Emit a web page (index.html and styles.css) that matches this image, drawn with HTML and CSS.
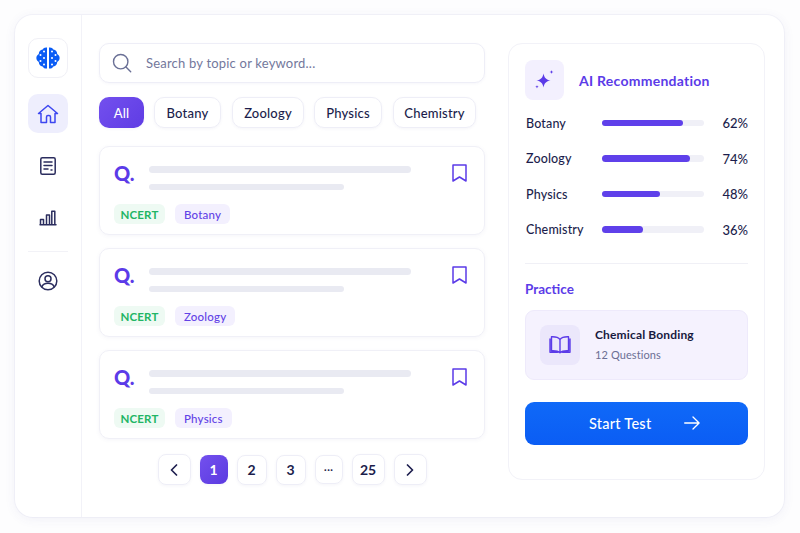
FILE: index.html
```html
<!DOCTYPE html>
<html lang="en">
<head>
<meta charset="utf-8">
<title>Question Bank</title>
<link rel="stylesheet" href="styles.css">
</head>
<body>
<div class="app">
  <nav class="sidebar">
    <div class="logo">
      <svg width="24" height="24" viewBox="0 0 24 24"><path fill="#0a5cf5" d="M11 1.5v21c-2 .4-3.6-.5-4.4-2C4.300 20 2.700 18.300 2.800 16 .9 14.800.3 13.400.4 12c-.1-1.400.5-2.800 2.400-4C2.700 5.700 4.300 4 6.600 3.500 7.400 2 9 1.100 11 1.500zM13 1.500c2-.4 3.600.5 4.400 2C19.700 4 21.300 5.700 21.200 8c1.900 1.200 2.500 2.600 2.400 4 .1 1.400-.5 2.800-2.400 4 .1 2.300-1.500 4-3.800 4.500-.8 1.500-2.400 2.400-4.400 2z"/><g fill="#fff"><circle cx="4.500" cy="9" r="1"/><circle cx="4.500" cy="15" r="1"/><circle cx="8" cy="12" r="1"/><circle cx="8" cy="5.500" r="1"/><circle cx="8" cy="18.500" r="1"/><circle cx="19.500" cy="9" r="1"/><circle cx="19.500" cy="15" r="1"/><circle cx="16" cy="12" r="1"/><circle cx="16" cy="5.500" r="1"/><circle cx="16" cy="18.500" r="1"/></g></svg>
    </div>
    <a class="nav-item nav-active">
      <svg width="22" height="20" viewBox="0 0 22 20" fill="none" stroke="#3d47f0" stroke-width="1.500" stroke-linejoin="round" stroke-linecap="round"><path d="M1.500 9.500 11 1.500l9.500 8h-2.500v9h-4.500v-5.500a1.500 1.500 0 0 0-1.500-1.500h-1a1.500 1.500 0 0 0-1.500 1.500v5.500H4v-9z"/></svg>
    </a>
    <a class="nav-item">
      <svg width="16" height="18" viewBox="0 0 16 18" fill="none" stroke="#2b2d5e" stroke-width="1.500" stroke-linecap="round" stroke-linejoin="round"><rect x=".8" y=".8" width="14.400" height="16.400" rx="1.500"/><path d="M4 5h8M4 8.500h8M4 12h4M11 13h1"/></svg>
    </a>
    <a class="nav-item">
      <svg width="18" height="16" viewBox="0 0 18 16" fill="none" stroke="#2b2d5e" stroke-width="1.500" stroke-linejoin="round" stroke-linecap="round"><path d="M1 14.800h16M1.500 14.800V9.500h3v5.300M7.500 14.800V5h3v9.800M12.800 14.800V1.200h3v13.600"/></svg>
    </a>
    <div class="nav-sep"></div>
    <a class="nav-item nav-user">
      <svg width="20" height="20" viewBox="0 0 20 20" fill="none" stroke="#2b2d5e" stroke-width="1.500"><circle cx="10" cy="10" r="8.800"/><circle cx="10" cy="7.800" r="3"/><path d="M3.800 16c1-2.600 3.300-3.700 6.200-3.700s5.200 1.100 6.200 3.700"/></svg>
    </a>
  </nav>

  <main class="main">
    <div class="search">
      <svg width="20" height="20" viewBox="0 0 20 20" fill="none" stroke="#6a7096" stroke-width="1.400" stroke-linecap="round"><circle cx="8.700" cy="8.700" r="7.200"/><path d="m14 14 4.700 4.700"/></svg>
      <span class="search-text">Search by topic or keyword...</span>
    </div>
    <div class="filters">
      <span class="chip chip-on chip-all">All</span>
      <span class="chip chip-botany">Botany</span>
      <span class="chip chip-zoology">Zoology</span>
      <span class="chip chip-physics">Physics</span>
      <span class="chip chip-chem">Chemistry</span>
    </div>
    <article class="card">
      <div class="card-top">
        <span class="q">Q.</span>
        <div class="lines"><i class="line line-long"></i><i class="line line-short"></i></div>
        <svg class="mark" width="15" height="18" viewBox="0 0 15 18" fill="none" stroke="#5b3be8" stroke-width="1.500" stroke-linejoin="round"><path d="M1 1h13v16l-6.500-4L1 17z"/></svg>
      </div>
      <div class="tags"><span class="tag tag-green">NCERT</span><span class="tag tag-purple">Botany</span></div>
    </article>
    <article class="card">
      <div class="card-top">
        <span class="q">Q.</span>
        <div class="lines"><i class="line line-long"></i><i class="line line-short"></i></div>
        <svg class="mark" width="15" height="18" viewBox="0 0 15 18" fill="none" stroke="#5b3be8" stroke-width="1.500" stroke-linejoin="round"><path d="M1 1h13v16l-6.500-4L1 17z"/></svg>
      </div>
      <div class="tags"><span class="tag tag-green">NCERT</span><span class="tag tag-purple">Zoology</span></div>
    </article>
    <article class="card">
      <div class="card-top">
        <span class="q">Q.</span>
        <div class="lines"><i class="line line-long"></i><i class="line line-short"></i></div>
        <svg class="mark" width="15" height="18" viewBox="0 0 15 18" fill="none" stroke="#5b3be8" stroke-width="1.500" stroke-linejoin="round"><path d="M1 1h13v16l-6.500-4L1 17z"/></svg>
      </div>
      <div class="tags"><span class="tag tag-green">NCERT</span><span class="tag tag-purple">Physics</span></div>
    </article>
    <div class="pager">
      <span class="page page-arrow"><svg width="8" height="12" viewBox="0 0 8 12" fill="none" stroke="#1e2050" stroke-width="1.700" stroke-linecap="round" stroke-linejoin="round"><path d="M6.500 1 1.500 6l5 5"/></svg></span>
      <span class="page page-on">1</span>
      <span class="page page-n">2</span>
      <span class="page page-n">3</span>
      <span class="page page-dots">···</span>
      <span class="page page-wide">25</span>
      <span class="page page-arrow"><svg width="8" height="12" viewBox="0 0 8 12" fill="none" stroke="#1e2050" stroke-width="1.700" stroke-linecap="round" stroke-linejoin="round"><path d="m1.500 1 5 5-5 5"/></svg></span>
    </div>
  </main>

  <aside class="panel">
    <header class="panel-head">
      <span class="spark-box">
        <svg width="22" height="22" viewBox="0 0 22 22" fill="#5b3be8"><path d="M9.500 3.500c.8 4.400 2.600 6.200 7 7-4.400.8-6.200 2.600-7 7-.8-4.400-2.600-6.200-7-7 4.400-.8 6.200-2.600 7-7z" transform="translate(0 1)"/><path d="M17.500 1c.2 1.300.7 1.800 2 2-1.300.2-1.800.7-2 2-.2-1.300-.7-1.800-2-2 1.300-.2 1.800-.7 2-2zM3 16c.2 1.100.6 1.500 1.700 1.700-1.100.2-1.500.6-1.700 1.700-.2-1.100-.6-1.500-1.700-1.700 1.100-.2 1.500-.6 1.700-1.700z"/></svg>
      </span>
      <h2 class="panel-title">AI Recommendation</h2>
    </header>
    <div class="stats">
      <div class="stat"><span class="stat-name">Botany</span><span class="track"><span class="fill" style="width:79%"></span></span><span class="pct">62%</span></div>
      <div class="stat"><span class="stat-name">Zoology</span><span class="track"><span class="fill" style="width:86%"></span></span><span class="pct">74%</span></div>
      <div class="stat"><span class="stat-name">Physics</span><span class="track"><span class="fill" style="width:57%"></span></span><span class="pct">48%</span></div>
      <div class="stat"><span class="stat-name">Chemistry</span><span class="track"><span class="fill" style="width:40%"></span></span><span class="pct">36%</span></div>
    </div>
    <div class="panel-sep"></div>
    <h3 class="practice-title">Practice</h3>
    <div class="practice">
      <span class="book-box">
        <svg width="22" height="20" viewBox="0 0 22 20" fill="none" stroke="#5b3be8" stroke-width="1.400" stroke-linejoin="round" stroke-linecap="round"><path d="M11 4.500C9.500 2.500 7 1.800 3.500 1.800H2.500v14h1.500c3 0 5.500.6 7 2 1.500-1.400 4-2 7-2h1.500v-14h-1c-3.500 0-6 .7-7.500 2.700zM11 4.500v13.300M1 4v13.300h7.500M21 4v13.300h-7.500"/></svg>
      </span>
      <div class="practice-text">
        <strong class="practice-name">Chemical Bonding</strong>
        <span class="practice-sub">12 Questions</span>
      </div>
    </div>
    <a class="start">
      <span class="start-label">Start Test</span>
      <svg width="16" height="14" viewBox="0 0 16 14" fill="none" stroke="#fff" stroke-width="1.300" stroke-linecap="round" stroke-linejoin="round"><path d="M.7 7h14.400M9 1l6.100 6L9 13"/></svg>
    </a>
  </aside>
</div>
</body>
</html>
```

FILE: styles.css
```css
* { box-sizing: border-box; }
html, body { height: 100%; }
body {
  margin: 0;
  padding: 15px 16px 16px 15px;
  background: #fdfdfe;
  font-family: "Lato", "Inter", sans-serif;
  color: #1c1e4c;
  overflow: hidden;
}
.app {
  display: flex;
  height: 502px;
  background: #fff;
  border-radius: 18px;
  box-shadow: 0 2px 12px rgba(70, 70, 160, .07), 0 0 0 1px #f5f5fa;
}
.sidebar {
  width: 67px;
  flex: none;
  border-right: 1px solid #f2f2f8;
  padding: 23px 13px 0;
  display: flex;
  flex-direction: column;
  align-items: center;
}
.logo {
  width: 40px;
  height: 40px;
  flex: none;
  border: 1px solid #f0f0f6;
  border-radius: 10px;
  display: flex;
  align-items: center;
  justify-content: center;
  margin-bottom: 16px;
}
.nav-item {
  width: 40px;
  height: 39px;
  flex: none;
  display: flex;
  align-items: center;
  justify-content: center;
  border-radius: 10px;
  margin-bottom: 13px;
}
.nav-active { background: #eeeefd; }
.nav-sep { width: 40px; height: 1px; background: #f2f2f7; margin: 1px 0 9px; flex: none; }
.nav-user { margin: 0; }

.main {
  width: 386px;
  flex: none;
  margin: 28px 0 0 17px;
  display: flex;
  flex-direction: column;
}
.search {
  height: 40px;
  flex: none;
  display: flex;
  align-items: center;
  gap: 14px;
  padding-left: 12px;
  border: 1px solid #eeeef7;
  border-radius: 10px;
  box-shadow: 0 1px 3px rgba(80, 80, 160, .05);
}
.search-text { font-size: 13px; letter-spacing: .2px; color: #73789c; }
.filters { display: flex; margin-top: 14px; height: 31px; flex: none; }
.chip {
  display: flex;
  align-items: center;
  justify-content: center;
  border: 1px solid #eeeef7;
  border-radius: 10px;
  font-size: 13px;
  font-weight: 500;
  letter-spacing: .2px;
  box-shadow: 0 1px 3px rgba(80, 80, 160, .06);
}
.chip-on {
  background: linear-gradient(135deg, #7350ee, #5f3ce4);
  border: 0;
  color: #fff;
}
.chip-all { width: 45px; margin-right: 10px; }
.chip-botany { width: 67px; margin-right: 11px; }
.chip-zoology { width: 72px; margin-right: 10px; }
.chip-physics { width: 68px; margin-right: 11px; }
.chip-chem { width: 83px; }

.card {
  height: 89px;
  flex: none;
  margin-bottom: 13px;
  padding: 15px 14px 0 14px;
  border: 1px solid #f0f0f7;
  border-radius: 10px;
  box-shadow: 0 1px 4px rgba(80, 80, 160, .06);
  display: flex;
  flex-direction: column;
}
.filters + .card { margin-top: 18px; }
.card-top { display: flex; align-items: flex-start; height: 41px; }
.q {
  width: 35px;
  flex: none;
  font-size: 20px;
  line-height: 22px;
  font-weight: 900;
  color: #5b3be8;
}
.lines { width: 262px; flex: none; display: flex; flex-direction: column; gap: 11px; padding-top: 4px; }
.line { display: block; height: 6.500px; border-radius: 4px; background: #e9eaf2; }
.line-short { width: 195px; }
.mark { margin-left: 41px; margin-top: 2px; }
.tags { display: flex; gap: 10px; margin-top: 1px; }
.tag {
  height: 20px;
  display: flex;
  align-items: center;
  padding: 0 9px;
  border-radius: 6px;
  font-size: 11.500px;
  letter-spacing: .2px;
}
.tag-green { width: 51px; background: #eefaf3; color: #22b565; font-weight: 700; justify-content: center; padding: 0; }
.tag-purple { background: #f3f0fe; color: #6242e6; font-weight: 500; }

.pager { display: flex; justify-content: center; align-items: center; gap: 9px; margin-top: 2px; }
.page {
  height: 31px;
  display: flex;
  align-items: center;
  justify-content: center;
  flex: none;
  border: 1px solid #eeeef7;
  border-radius: 8px;
  font-size: 14px;
  font-weight: 700;
  box-shadow: 0 1px 3px rgba(80, 80, 160, .06);
}
.page-arrow { width: 33px; }
.page-on { width: 28px; height: 29px; border: 0; color: #fff; background: linear-gradient(135deg, #7350ee, #5b3ae0); }
.page-n { width: 30px; height: 30px; }
.page-dots { width: 28px; height: 29px; font-size: 12px; font-weight: 400; }
.page-wide { width: 33px; }

.panel {
  width: 257px;
  height: 437px;
  flex: none;
  margin: 28px 0 0 23px;
  padding: 16px 16px 0;
  border: 1px solid #f2f2f8;
  border-radius: 14px;
  display: flex;
  flex-direction: column;
}
.panel-head { display: flex; align-items: center; gap: 15px; }
.spark-box {
  width: 39px;
  height: 40px;
  flex: none;
  display: flex;
  align-items: center;
  justify-content: center;
  border-radius: 8px;
  background: #f3f0fe;
}
.panel-title { margin: 0; font-size: 14px; font-weight: 700; color: #5b3be8; letter-spacing: .25px; }
.stats { display: flex; flex-direction: column; gap: 15.500px; margin-top: 13px; }
.stat { display: flex; align-items: center; height: 20px; }
.stat-name { width: 77px; padding-left: 1px; flex: none; font-size: 12.500px; font-weight: 500; letter-spacing: .15px; }
.track { width: 102px; height: 6.500px; flex: none; border-radius: 4px; background: #f0f0f7; display: block; }
.fill { display: block; height: 100%; border-radius: 4px; background: #5f40ea; }
.pct { flex: 1; text-align: right; font-size: 13px; font-weight: 500; }
.panel-sep { height: 1px; background: #f0f0f6; margin-top: 23px; flex: none; }
.practice-title { margin: 17px 0 0; font-size: 13.500px; line-height: 17px; font-weight: 700; color: #5b3be8; }
.practice {
  height: 70px;
  flex: none;
  margin-top: 12px;
  display: flex;
  align-items: center;
  gap: 15px;
  padding-left: 14px;
  background: #f5f2fe;
  border: 1px solid #eeeafb;
  border-radius: 9px;
}
.book-box {
  width: 40px;
  height: 40px;
  flex: none;
  display: flex;
  align-items: center;
  justify-content: center;
  border-radius: 8px;
  background: #ebe7fb;
}
.practice-text { display: flex; flex-direction: column; gap: 6px; }
.practice-name { font-size: 12px; line-height: 15px; font-weight: 700; color: #181a40; letter-spacing: .15px; }
.practice-sub { font-size: 11px; line-height: 14px; color: #6b6f94; letter-spacing: .1px; }
.start {
  height: 43px;
  flex: none;
  margin-top: 22px;
  display: flex;
  align-items: center;
  padding-left: 64px;
  gap: 33px;
  color: #fff;
  background: linear-gradient(180deg, #0f69f8, #0b5df4);
  border-radius: 9px;
}
.start-label { font-size: 14.500px; font-weight: 500; letter-spacing: .25px; }
```
